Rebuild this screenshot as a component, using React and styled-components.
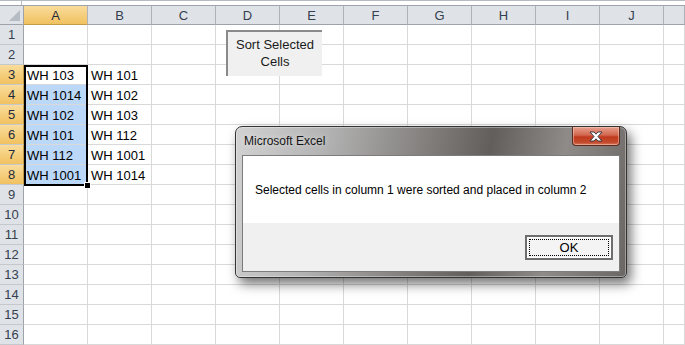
import React from "react";
import styled, { createGlobalStyle } from "styled-components";

const columns = ["A", "B", "C", "D", "E", "F", "G", "H", "I", "J", ""];
const cellA = { 3: "WH 103", 4: "WH 1014", 5: "WH 102", 6: "WH 101", 7: "WH 112", 8: "WH 1001" };
const cellB = { 3: "WH 101", 4: "WH 102", 5: "WH 103", 6: "WH 112", 7: "WH 1001", 8: "WH 1014" };
const rows = Array.from({ length: 16 }, (_, i) => i + 1);

export default function App() {
  return (
    <Page>
      <GlobalStyle />
      <TopStrip>
        <NameBoxEdge />
      </TopStrip>
      <Sheet>
        <Corner>
          <CornerTriangle />
        </Corner>
        {columns.map((c, i) => (
          <ColHead key={"h" + i} $selected={c === "A"}>
            {c}
          </ColHead>
        ))}
        {rows.map((r) => (
          <React.Fragment key={r}>
            <RowHead $selected={r >= 3 && r <= 8}>{r}</RowHead>
            {columns.map((c, i) => (
              <Cell key={c + i} $selected={c === "A" && r >= 4 && r <= 8}>
                {c === "A" ? cellA[r] : c === "B" ? cellB[r] : ""}
              </Cell>
            ))}
          </React.Fragment>
        ))}
      </Sheet>

      <SelectionFrame>
        <FillHandle />
      </SelectionFrame>

      <SortButton>
        Sort Selected
        <br />
        Cells
      </SortButton>

      <Dialog>
        <TitleBar>
          <Title>Microsoft Excel</Title>
          <CloseButton>
            <svg width="16" height="11" viewBox="0 0 16 11">
              <path
                d="M2 1 L6 1 L8 3.2 L10 1 L14 1 L10 5.5 L14 10 L10 10 L8 7.8 L6 10 L2 10 L6 5.5 Z"
                fill="#ffffff"
                stroke="#3c3c46"
                strokeWidth="1"
                strokeLinejoin="round"
              />
            </svg>
          </CloseButton>
        </TitleBar>
        <Content>
          <Message>Selected cells in column 1 were sorted and placed in column 2</Message>
          <ButtonArea>
            <OkButton>
              <FocusRing>OK</FocusRing>
            </OkButton>
          </ButtonArea>
        </Content>
      </Dialog>
    </Page>
  );
}

const GlobalStyle = createGlobalStyle`
  html, body {
    margin: 0;
    padding: 0;
    background: #ffffff;
    overflow: hidden;
  }
  * {
    box-sizing: border-box;
  }
`;

const Page = styled.div`
  position: relative;
  width: 685px;
  height: 345px;
  overflow: hidden;
  font-family: "Liberation Sans", Arial, sans-serif;
`;

const TopStrip = styled.div`
  position: relative;
  height: 6px;
  border-top: 1px solid #b7bcc2;
  border-bottom: 1px solid #9ea3a9;
  background: #ffffff;
`;

const NameBoxEdge = styled.div`
  width: 22px;
  height: 100%;
  border-right: 1px solid #b7bcc2;
`;

const Sheet = styled.div`
  display: grid;
  grid-template-columns: 24px repeat(10, 64px) 1fr;
  grid-template-rows: 19px repeat(16, 20px);
`;

const HeadBase = styled.div`
  display: flex;
  align-items: center;
  justify-content: center;
  font-size: 13px;
  color: ${(p) => (p.$selected ? "#1f2a3a" : "#35404f")};
  background: ${(p) =>
    p.$selected
      ? "linear-gradient(#f9dc9c, #f1c15f)"
      : "#dfe3e8"};
`;

const Corner = styled(HeadBase)`
  position: relative;
  border-right: 1px solid #9ea3a9;
  border-bottom: 1px solid #9ea3a9;
`;

const CornerTriangle = styled.div`
  position: absolute;
  right: 3px;
  bottom: 3px;
  width: 0;
  height: 0;
  border-left: 11px solid transparent;
  border-bottom: 11px solid #b6bcc3;
`;

const ColHead = styled(HeadBase)`
  border-right: 1px solid #aeb3b9;
  border-bottom: 1px solid ${(p) => (p.$selected ? "#c29a48" : "#9ea3a9")};
`;

const RowHead = styled(HeadBase)`
  font-size: 13px;
  border-right: 1px solid ${(p) => (p.$selected ? "#c29a48" : "#9ea3a9")};
  border-bottom: 1px solid #c5c9ce;
`;

const Cell = styled.div`
  display: flex;
  align-items: center;
  padding: 1px 0 0 3px;
  font-size: 13px;
  color: #000000;
  white-space: nowrap;
  background: ${(p) => (p.$selected ? "#bcd8f8" : "#ffffff")};
  border-right: 1px solid #d9d9d9;
  border-bottom: 1px solid #d9d9d9;
`;

const SelectionFrame = styled.div`
  position: absolute;
  left: 24px;
  top: 65px;
  width: 64px;
  height: 121px;
  border: 2px solid #000000;
`;

const FillHandle = styled.div`
  position: absolute;
  right: -5px;
  bottom: -5px;
  width: 7px;
  height: 7px;
  background: #000000;
  border: 1px solid #ffffff;
`;

const SortButton = styled.div`
  position: absolute;
  left: 226px;
  top: 30px;
  width: 96px;
  height: 46px;
  display: flex;
  align-items: center;
  justify-content: center;
  text-align: center;
  font-size: 13px;
  line-height: 17px;
  color: #1a1a1a;
  background: #f0f0f0;
  border-left: 2px solid #8a8a8a;
  border-top: 2px solid #8a8a8a;
  padding-bottom: 2px;
`;

const Dialog = styled.div`
  position: absolute;
  left: 235px;
  top: 126px;
  width: 392px;
  height: 152px;
  display: flex;
  flex-direction: column;
  border: 1px solid #343434;
  border-radius: 7px 7px 5px 5px;
  background: linear-gradient(
    100deg,
    #d2d2d2 0%,
    #b3b3b3 22%,
    #7b7775 50%,
    #625e5c 62%,
    #8f8b89 80%,
    #6a6664 100%
  );
  box-shadow: inset 0 0 0 1px rgba(255, 255, 255, 0.35),
    4px 6px 12px rgba(0, 0, 0, 0.55);
  padding: 0 6px 5px 6px;
`;

const TitleBar = styled.div`
  position: relative;
  height: 28px;
  display: flex;
  align-items: center;
  padding-left: 2px;
  flex-shrink: 0;
`;

const Title = styled.span`
  font-size: 12px;
  color: #141414;
  text-shadow: 0 0 6px rgba(255, 255, 255, 0.7);
`;

const CloseButton = styled.div`
  position: absolute;
  right: 0;
  top: 0;
  width: 48px;
  height: 19px;
  display: flex;
  align-items: center;
  justify-content: center;
  border: 1px solid #5b2b22;
  border-top: none;
  border-radius: 0 0 4px 4px;
  background: linear-gradient(#e7a08f 0%, #d2674f 45%, #bf3a1f 55%, #c44a2c 85%, #d77a5c 100%);
  box-shadow: inset 0 0 0 1px rgba(255, 220, 200, 0.45);
`;

const Content = styled.div`
  flex: 1;
  display: flex;
  flex-direction: column;
  border: 1px solid #7c7c7c;
  background: #f0f0f0;
`;

const Message = styled.div`
  height: 67px;
  display: flex;
  align-items: center;
  padding: 1px 0 0 12px;
  font-size: 12px;
  color: #000000;
  background: #ffffff;
`;

const ButtonArea = styled.div`
  display: flex;
  justify-content: flex-end;
  padding: 12px 6px 0 0;
`;

const OkButton = styled.div`
  width: 88px;
  height: 25px;
  padding: 2px;
  border: 2px solid #6e6e6e;
  background: #f4f4f4;
  box-shadow: inset 0 0 0 1px #ffffff;
`;

const FocusRing = styled.div`
  height: 100%;
  display: flex;
  align-items: center;
  justify-content: center;
  font-size: 13px;
  color: #000000;
  border: 1px dotted #000000;
`;
